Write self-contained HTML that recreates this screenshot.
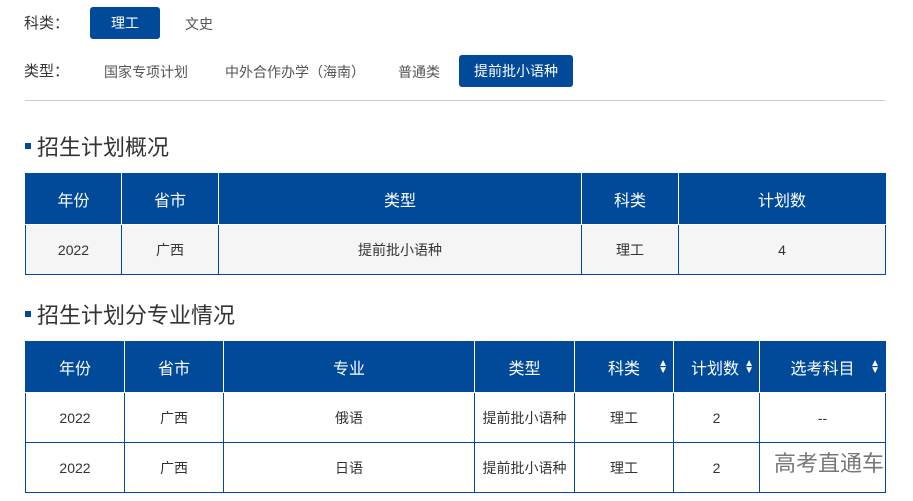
<!DOCTYPE html>
<html><head><meta charset="utf-8"><style>
*{margin:0;padding:0;box-sizing:border-box}
body{width:913px;height:501px;background:#fff;font-family:"Liberation Sans","Noto Sans CJK SC",sans-serif;color:#333;position:relative;overflow:hidden}
.a{position:absolute;white-space:nowrap}
.lbl{font-size:15px;color:#333}
.opt{font-size:14px;color:#555}
.btn{background:#004a99;color:#fff;font-size:14px;border-radius:3px;text-align:center}
.h{font-size:22px;color:#333}
.sq{position:absolute;width:6px;height:6px;background:#004a99}
table{position:absolute;border-collapse:collapse;table-layout:fixed;font-size:14px;left:25px}
th{background:#004a99;color:#fff;font-weight:normal;font-size:16px;border:1px solid #fff;height:51px;text-align:center;position:relative}
td{border:1px solid #004a99;text-align:center;height:50px;color:#333}
tr:first-child th{border-top-color:#004a99}
th:first-child{border-left-color:#004a99}th:last-child{border-right-color:#004a99}
.s{position:absolute;right:5px;top:18px;font-size:10px;line-height:7px}
</style></head><body>
<div class="a lbl" style="left:24px;top:12px">科类：</div>
<div class="a btn" style="left:90px;top:7px;width:70px;height:32px;line-height:32px">理工</div>
<div class="a opt" style="left:185px;top:14px">文史</div>
<div class="a lbl" style="left:24px;top:60px">类型：</div>
<div class="a opt" style="left:104px;top:62px">国家专项计划</div>
<div class="a opt" style="left:225px;top:62px">中外合作办学（海南）</div>
<div class="a opt" style="left:398px;top:62px">普通类</div>
<div class="a btn" style="left:459px;top:55px;width:114px;height:32px;line-height:32px">提前批小语种</div>
<div class="a" style="left:25px;top:100px;width:860px;height:1px;background:#ccc"></div>

<div class="sq" style="left:25px;top:143px"></div>
<div class="a h" style="left:37px;top:130px">招生计划概况</div>
<table style="top:173px;width:861px">
<colgroup><col style="width:96px"><col style="width:97px"><col style="width:363px"><col style="width:97px"><col></colgroup>
<tr><th>年份</th><th>省市</th><th>类型</th><th>科类</th><th>计划数</th></tr>
<tr style="background:#f5f5f5"><td>2022</td><td>广西</td><td>提前批小语种</td><td>理工</td><td>4</td></tr>
</table>

<div class="sq" style="left:25px;top:311px"></div>
<div class="a h" style="left:37px;top:298px">招生计划分专业情况</div>
<table style="top:341px;width:861px">
<colgroup><col style="width:99px"><col style="width:99px"><col style="width:251px"><col style="width:100px"><col style="width:99px"><col style="width:86px"><col></colgroup>
<tr><th>年份</th><th>省市</th><th>专业</th><th>类型</th><th>科类<span class="s">▲<br>▼</span></th><th style="text-align:left;padding-left:17px">计划数<span class="s">▲<br>▼</span></th><th>选考科目<span class="s">▲<br>▼</span></th></tr>
<tr><td>2022</td><td>广西</td><td>俄语</td><td>提前批小语种</td><td>理工</td><td>2</td><td>--</td></tr>
<tr><td>2022</td><td>广西</td><td>日语</td><td>提前批小语种</td><td>理工</td><td>2</td><td></td></tr>
</table>
<div class="a" style="left:774px;top:446px;font-size:22px;color:#777">高考直通车</div>
</body></html>
